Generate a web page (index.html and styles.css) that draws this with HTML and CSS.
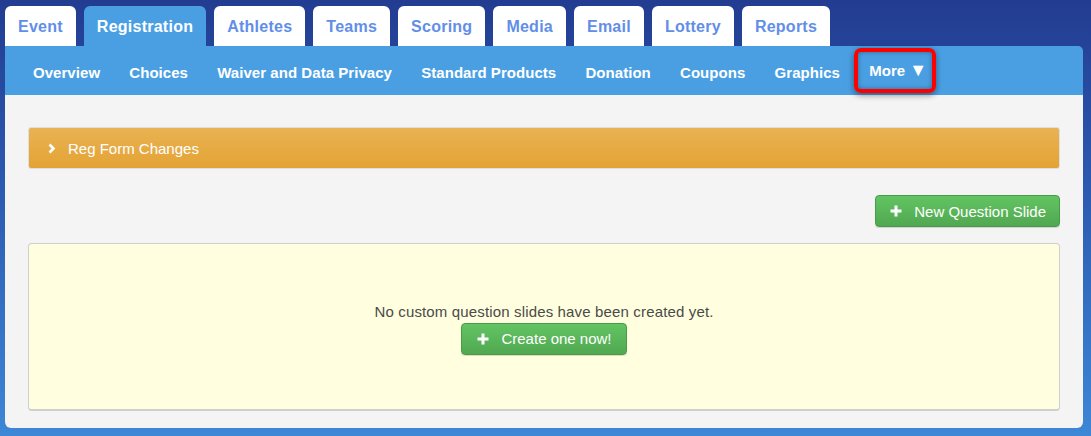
FILE: index.html
```html
<!DOCTYPE html>
<html>
<head>
<meta charset="utf-8">
<link rel="stylesheet" href="styles.css">
</head>
<body>
<div class="page">
  <nav class="tabs">
    <a class="tab">Event</a>
    <a class="tab active">Registration</a>
    <a class="tab">Athletes</a>
    <a class="tab">Teams</a>
    <a class="tab">Scoring</a>
    <a class="tab">Media</a>
    <a class="tab">Email</a>
    <a class="tab">Lottery</a>
    <a class="tab">Reports</a>
  </nav>
  <nav class="subnav">
    <a class="sub">Overview</a>
    <a class="sub">Choices</a>
    <a class="sub">Waiver and Data Privacy</a>
    <a class="sub">Standard Products</a>
    <a class="sub">Donation</a>
    <a class="sub">Coupons</a>
    <a class="sub">Graphics</a>
    <a class="sub more">More <span class="caret">&#9660;</span></a>
  </nav>
  <main class="panel">
    <div class="accordion">
      <svg class="chev" width="8" height="11" viewBox="0 0 8 11"><path d="M1.5 1.5 L5.5 5.5 L1.5 9.5" fill="none" stroke="#fff" stroke-width="2.6"/></svg>
      <span>Reg Form Changes</span>
    </div>
    <div class="actions">
      <button class="btn">
        <svg class="plus" width="12" height="12" viewBox="0 0 12 12"><path d="M6 0.5 V11.5 M0.5 6 H11.5" stroke="#fff" stroke-width="3"/></svg>
        <span>New Question Slide</span>
      </button>
    </div>
    <div class="empty">
      <p class="msg">No custom question slides have been created yet.</p>
      <button class="btn">
        <svg class="plus" width="12" height="12" viewBox="0 0 12 12"><path d="M6 0.5 V11.5 M0.5 6 H11.5" stroke="#fff" stroke-width="3"/></svg>
        <span>Create one now!</span>
      </button>
    </div>
  </main>
</div>
</body>
</html>
```
FILE: styles.css
```css
html, body {
  margin: 0;
  padding: 0;
  height: 100%;
}
body {
  background: linear-gradient(to bottom, #223c91 0%, #2c5cb2 45%, #3d87d6 100%);
  font-family: "Liberation Sans", Arial, sans-serif;
}
.page {
  padding: 6px 8px 8px 5px;
}
.tabs {
  display: flex;
  gap: 8px;
  height: 40px;
}
.tab {
  display: flex;
  align-items: center;
  padding: 1px 13px 0 13px;
  background: #ffffff;
  color: #628ee8;
  font-weight: bold;
  font-size: 16px;
  letter-spacing: 0.25px;
  border-radius: 6px 6px 0 0;
}
.tab.active {
  background: #4a9fe3;
  color: #ffffff;
}
.subnav {
  display: flex;
  align-items: center;
  height: 45px;
  padding: 4px 0 0 13.4px;
  background: #4a9fe3;
  border-radius: 0 5px 0 0;
  width: 1064.6px;
}
.sub {
  color: #ffffff;
  font-weight: bold;
  font-size: 15px;
  letter-spacing: 0.05px;
  padding: 0 14.6px;
  white-space: nowrap;
}
.more {
  position: relative;
  margin-top: -4px;
  padding: 0 7px 0 14.6px;
  display: flex;
  align-items: center;
}
.caret {
  font-size: 18px;
  line-height: 17px;
  margin-left: 4px;
}
.more::after {
  content: "";
  position: absolute;
  left: -1px;
  right: -2px;
  top: -14px;
  bottom: -14px;
  border: 4px solid #ff0000;
  border-radius: 7px;
  box-shadow: 0 2px 6px rgba(0,0,0,0.45), inset 0 0 5px rgba(0,0,0,0.35);
}
.panel {
  width: 1032px;
  background: #f4f4f4;
  padding: 32px 23px 17px 23px;
  border-radius: 0 0 6px 6px;
}
.accordion {
  display: flex;
  align-items: center;
  height: 40px;
  border: 1px solid #dedede;
  border-radius: 3px;
  background: linear-gradient(to bottom, #e9b253 0%, #e4a334 100%);
  color: #ffffff;
  font-size: 15px;
  padding-left: 19px;
}
.chev {
  margin-right: 12px;
}
.actions {
  display: flex;
  justify-content: flex-end;
  margin-top: 26px;
  margin-bottom: 16px;
}
.btn {
  display: flex;
  align-items: center;
  height: 32px;
  padding: 0 13px 0 14px;
  border: 1px solid #4a9a4a;
  border-radius: 4px;
  background: linear-gradient(to bottom, #62c462 0%, #51a851 100%);
  color: #ffffff;
  font-family: "Liberation Sans", Arial, sans-serif;
  font-size: 15px;
  box-shadow: 0 1px 1px rgba(0,0,0,0.15);
}
.plus {
  margin-right: 12px;
}
.empty {
  border: 1px solid #cfcfcf;
  border-bottom-width: 2px;
  border-radius: 4px;
  background: #ffffdf;
  display: flex;
  flex-direction: column;
  align-items: center;
  justify-content: center;
  padding-top: 4px;
  box-sizing: border-box;
  height: 168px;
}
.msg {
  margin: 0 0 3px 0;
  font-size: 15px;
  letter-spacing: 0.15px;
  color: #4a4a4a;
}
.empty .btn {
  padding: 0 14px 0 15px;
}
```
